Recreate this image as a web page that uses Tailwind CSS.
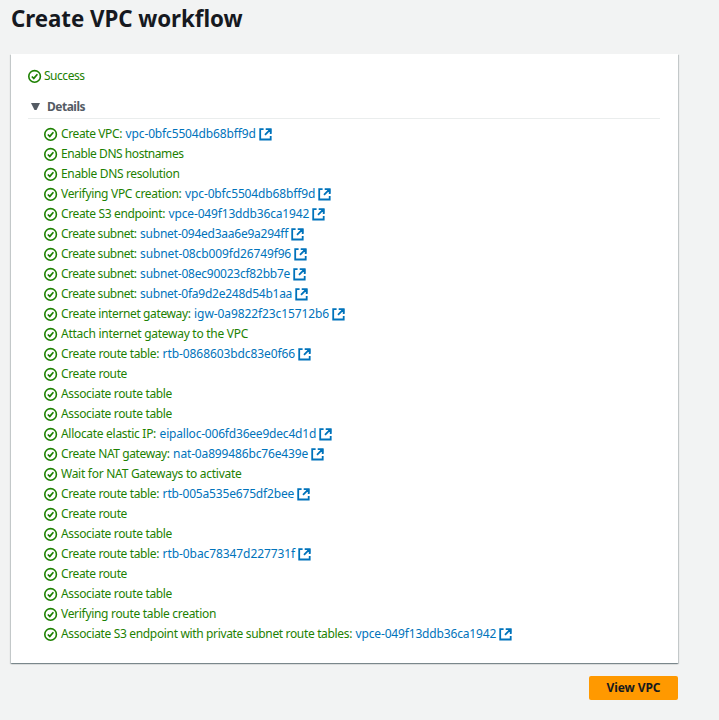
<!DOCTYPE html>
<html lang="en">
<head>
<meta charset="utf-8">
<title>Create VPC workflow</title>
<script src="https://cdn.jsdelivr.net/npm/@tailwindcss/browser@4"></script>
</head>
<body class="h-[720px] overflow-hidden bg-[#f2f3f3] font-['Noto_Sans','Open_Sans',sans-serif] text-[12px] leading-5">
<svg class="hidden">
  <symbol id="ok" viewBox="0 0 14 14"><circle cx="6.6" cy="7.4" r="5.8" fill="none" stroke="currentColor" stroke-width="1.6"/><path d="M3.8 7.5 5.8 9.4 9.4 5.3" fill="none" stroke="currentColor" stroke-width="1.7"/></symbol>
  <symbol id="ext" viewBox="0 0 13 13"><path d="M4.6 1.2H1.2V11.5H11.7V8M6.7 1.2H11.7V6M11.4 1.4 6 6.9" fill="none" stroke="currentColor" stroke-width="1.8"/><path d="M8 1H12.4V5.4Z" fill="currentColor"/></symbol>
</svg>
<main class="w-[679px] pl-[11px] pr-px">
  <h1 class="h-[54px] pt-[3px] text-[22.3px] leading-[32px] font-bold whitespace-nowrap text-[#16191f]"><span class="tracking-[-0.05px]">Create VPC workflow</span></h1>
  <section class="h-[609px] w-[667px] bg-white px-[17px] pt-3 shadow-[0_1px_1px_0_rgba(0,28,36,0.3),1px_1px_1px_0_rgba(0,28,36,0.15),-1px_1px_1px_0_rgba(0,28,36,0.15)]">
    <div class="flex h-5 items-center text-[#1d8102]"><svg class="mr-[2px] h-[14px] w-[14px]"><use href="#ok"/></svg><span data-w="40.5">Success</span></div>
    <div class="mt-[11px] flex h-[22px] w-[632px] items-start border-b border-[#eaeded] pl-[3px] font-bold text-[#545b64]"><svg class="mt-[6px] mr-[7px] h-[7px] w-[9px]" viewBox="0 0 9 7"><path d="M0 0H9L5.5 7H3.5Z" fill="currentColor"/></svg><span data-bold data-w="38">Details</span></div>
    <ul id="steps" class="mt-[5px] pl-4 text-[#1d8102]"></ul>
  </section>
  <div class="mt-[13px] flex justify-end"><button class="h-6 w-[89px] rounded-[2px] bg-[#ff9900] text-[12px] leading-6 font-bold text-[#16191f]"><span data-bold data-w="54">View VPC</span></button></div>
</main>
<script>
/* label, label width, resource id, id width */
const steps = [
["Create VPC:",61,"vpc-0bfc5504db68bff9d",130],
["Enable DNS hostnames",122.5],
["Enable DNS resolution",118.5],
["Verifying VPC creation:",120.5,"vpc-0bfc5504db68bff9d",130],
["Create S3 endpoint:",104,"vpce-049f13ddb36ca1942",140.5],
["Create subnet:",75.5,"subnet-094ed3aa6e9a294ff",148],
["Create subnet:",75.5,"subnet-08cb009fd26749f96",151],
["Create subnet:",75.5,"subnet-08ec90023cf82bb7e",150],
["Create subnet:",75.5,"subnet-0fa9d2e248d54b1aa",152],
["Create internet gateway:",129.5,"igw-0a9822f23c15712b6",135],
["Attach internet gateway to the VPC",187],
["Create route table:",98,"rtb-0868603bdc83e0f66",132.5],
["Create route",66],
["Associate route table",111],
["Associate route table",111],
["Allocate elastic IP:",95,"eipalloc-006fd36ee9dec4d1d",156.5],
["Create NAT gateway:",108.5,"nat-0a899486bc76e439e",135],
["Wait for NAT Gateways to activate",180.5],
["Create route table:",98,"rtb-005a535e675df2bee",131.5],
["Create route",66],
["Associate route table",111],
["Create route table:",98,"rtb-0bac78347d227731f",132.5],
["Create route",66],
["Associate route table",111],
["Verifying route table creation",155],
["Associate S3 endpoint with private subnet route tables:",291,"vpce-049f13ddb36ca1942",140.5]
];
document.getElementById("steps").innerHTML = steps.map(([t,w,id,iw]) =>
`<li class="flex h-5 items-center whitespace-nowrap"><svg class="mr-[3px] h-[14px] w-[14px] shrink-0"><use href="#ok"/></svg><span data-w="${w}">${t}</span>${id ? `<a class="ml-[3.6px] flex items-center text-[#0073bb]"><span data-w="${iw}">${id}</span><svg class="ml-[3px] h-[13px] w-[13px] shrink-0"><use href="#ext"/></svg></a>` : ""}</li>`).join("");
/* spread each text over its column width */
const ctx = document.createElement("canvas").getContext("2d");
document.querySelectorAll("[data-w]").forEach(e => {
  ctx.font = ("bold" in e.dataset ? "bold " : "") + "12px 'Noto Sans'";
  e.style.letterSpacing = (e.dataset.w - ctx.measureText(e.textContent).width) / e.textContent.length + "px";
});
</script>
</body>
</html>
